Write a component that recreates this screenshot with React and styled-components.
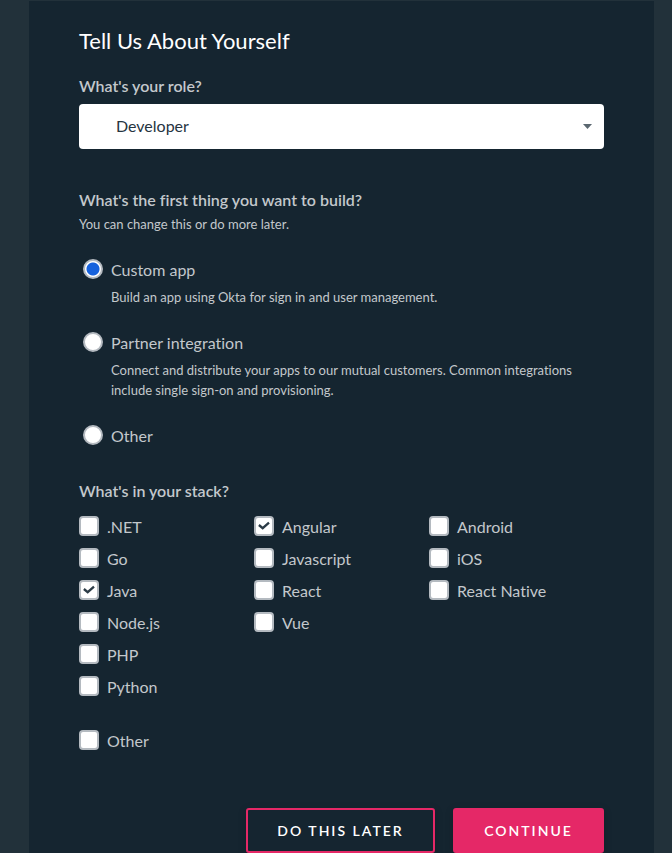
import React, { useState } from "react";
import styled, { createGlobalStyle } from "styled-components";

const GlobalStyle = createGlobalStyle`
  *, *::before, *::after { box-sizing: border-box; }
  body {
    margin: 0;
    background: #22313a;
    color: #c3c8cc;
    font-family: Lato, "Open Sans", sans-serif;
    font-size: 16px;
    font-variant-ligatures: none;
    line-height: 22px;
  }
`;

const Card = styled.main`
  margin: 1px 18px 0 29px;
  padding: 24px 50px 0;
  background: #152530;
`;

const Title = styled.h1`
  margin: 0 0 18px;
  color: #fff;
  font-size: 22px;
  font-weight: 400;
  line-height: 32px;
`;

const RoleField = styled.div`
  display: flex;
  flex-direction: column;
  gap: 7px;
`;

const RoleLabel = styled.label`
  font-weight: 600;
`;

const SelectBox = styled.div`
  display: grid;
  align-items: center;

  > * { grid-area: 1 / 1; }
`;

const Select = styled.select`
  appearance: none;
  width: 100%;
  height: 45px;
  padding: 0 36px 2px 37px;
  border: 0;
  border-radius: 4px;
  background: #fff;
  color: #26343f;
  font: inherit;
`;

const Caret = styled.svg`
  justify-self: end;
  margin-right: 12px;
  pointer-events: none;
`;

const Group = styled.fieldset`
  margin: ${({ $top }) => $top}px 0 0;
  padding: 0;
  border: 0;
  min-width: 0;
`;

const Legend = styled.legend`
  padding: 0;
  font-weight: 600;
`;

const Hint = styled.p`
  margin: 3px 0 25px;
  font-size: 13px;
  line-height: 20px;
`;

const RadioList = styled.div`
  display: flex;
  flex-direction: column;
  gap: 25px;
`;

const RadioOption = styled.div`
  padding-left: 4px;
`;

const OptionLabel = styled.label`
  display: flex;
  align-items: flex-start;
  gap: 8px;
`;

const Radio = styled.input`
  appearance: none;
  flex: none;
  width: 20px;
  height: 20px;
  margin: 0;
  border: 2px solid #b4bac0;
  border-radius: 50%;
  background: #fff;

  &:checked {
    background: radial-gradient(circle, #1662dd 6px, #fff 7px);
  }
`;

const Description = styled.p`
  margin: 6px 0 0 28px;
  font-size: 13px;
  line-height: 20px;
`;

const StackColumns = styled.div`
  display: grid;
  grid-template-columns: repeat(3, 1fr);
  margin: 14px 0 32px;
`;

const StackColumn = styled.div`
  display: flex;
  flex-direction: column;
  gap: 10px;
`;

const CheckFrame = styled.span`
  display: grid;
  flex: none;
  width: 20px;
  height: 20px;

  > * { grid-area: 1 / 1; }
`;

const CheckInput = styled.input`
  appearance: none;
  width: 20px;
  height: 20px;
  margin: 0;
  border: 2px solid #b4bac0;
  border-radius: 4px;
  background: #fff;

  & + svg { visibility: hidden; pointer-events: none; }
  &:checked + svg { visibility: visible; }
`;

const Actions = styled.div`
  display: flex;
  justify-content: flex-end;
  gap: 18px;
  margin-top: 56px;
`;

const Button = styled.button`
  width: ${({ $width }) => $width}px;
  height: 45px;
  padding: 0;
  border: 2px solid #e52867;
  border-radius: 3px;
  background: ${({ $primary }) => ($primary ? "#e52867" : "transparent")};
  box-shadow: 0 2px 8px rgba(0, 0, 0, 0.15);
  color: #fff;
  font-family: inherit;
  font-size: 14px;
  font-weight: 600;
  letter-spacing: 2px;
  text-transform: uppercase;
`;

const goals = [
  { id: "custom", label: "Custom app", text: "Build an app using Okta for sign in and user management." },
  {
    id: "partner",
    label: "Partner integration",
    text: "Connect and distribute your apps to our mutual customers. Common integrations include single sign-on and provisioning.",
  },
  { id: "other", label: "Other" },
];

const stacks = [
  [".NET", "Go", "Java", "Node.js", "PHP", "Python"],
  ["Angular", "Javascript", "React", "Vue"],
  ["Android", "iOS", "React Native"],
];

function CheckOption({ label, defaultChecked }) {
  return (
    <OptionLabel>
      <CheckFrame>
        <CheckInput type="checkbox" name="stack" value={label} defaultChecked={defaultChecked} />
        <svg width="20" height="20" viewBox="0 0 20 20" fill="none" aria-hidden="true">
          <path d="M4.9 9 8.7 12.2 15 6.7" stroke="#2b3b46" strokeWidth="2.3" />
        </svg>
      </CheckFrame>
      {label}
    </OptionLabel>
  );
}

export default function App() {
  const [goal, setGoal] = useState("custom");

  return (
    <>
      <GlobalStyle />
      <Card>
        <form onSubmit={(event) => event.preventDefault()}>
          <Title>Tell Us About Yourself</Title>
          <RoleField>
            <RoleLabel htmlFor="role">What's your role?</RoleLabel>
            <SelectBox>
              <Select id="role" defaultValue="Developer">
                <option>Developer</option>
              </Select>
              <Caret width="9" height="5" viewBox="0 0 9 5" aria-hidden="true">
                <path d="M0 0H9L4.5 5Z" fill="#5b6770" />
              </Caret>
            </SelectBox>
          </RoleField>

          <Group $top={40}>
            <Legend>What's the first thing you want to build?</Legend>
            <Hint>You can change this or do more later.</Hint>
            <RadioList>
              {goals.map(({ id, label, text }) => (
                <RadioOption key={id}>
                  <OptionLabel>
                    <Radio
                      type="radio"
                      name="goal"
                      value={id}
                      checked={goal === id}
                      onChange={() => setGoal(id)}
                      aria-describedby={text ? `${id}-text` : undefined}
                    />
                    {label}
                  </OptionLabel>
                  {text && <Description id={`${id}-text`}>{text}</Description>}
                </RadioOption>
              ))}
            </RadioList>
          </Group>

          <Group $top={33}>
            <Legend>What's in your stack?</Legend>
            <StackColumns>
              {stacks.map((column) => (
                <StackColumn key={column[0]}>
                  {column.map((name) => (
                    <CheckOption
                      key={name}
                      label={name}
                      defaultChecked={name === "Java" || name === "Angular"}
                    />
                  ))}
                </StackColumn>
              ))}
            </StackColumns>
            <CheckOption label="Other" />
          </Group>

          <Actions>
            <Button type="button" $width={189}>Do this later</Button>
            <Button type="submit" $width={151} $primary>Continue</Button>
          </Actions>
        </form>
      </Card>
    </>
  );
}
